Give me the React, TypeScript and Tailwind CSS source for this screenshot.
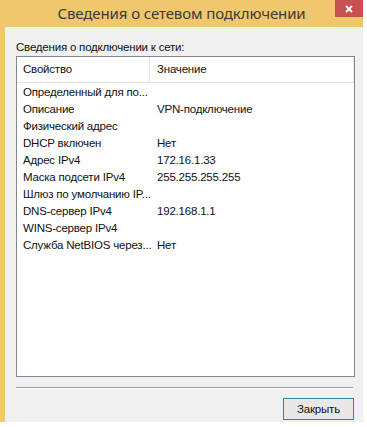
const rows: [string, string][] = [
  ['Определенный для по...', ''],
  ['Описание', 'VPN-подключение'],
  ['Физический адрес', ''],
  ['DHCP включен', 'Нет'],
  ['Адрес IPv4', '172.16.1.33'],
  ['Маска подсети IPv4', '255.255.255.255'],
  ['Шлюз по умолчанию IP...', ''],
  ['DNS-сервер IPv4', '192.168.1.1'],
  ['WINS-сервер IPv4', ''],
  ['Служба NetBIOS через...', 'Нет'],
];

export default function App() {
  return (
    <div className="w-[367px] h-[427px] bg-white font-['Liberation_Sans',Arial,sans-serif] text-[11.5px] tracking-[-0.2px] text-[#111]">
      <div className="w-[363px] h-[422px] flex flex-col overflow-hidden">
        {/* title bar */}
        <div className="h-[27px] bg-[#f0c76c] flex relative">
          <div className="flex-1 text-center font-['Noto_Sans',sans-serif] text-[15px] tracking-[-0.1px] leading-[26px] text-[#3a3a3a]">
            Сведения о сетевом подключении
          </div>
          <div className="absolute right-0 top-0 w-[28px] h-[17px] bg-[#c75050] flex items-center justify-center">
            <svg width="8" height="8" viewBox="0 0 8 8">
              <path d="M1 1L7 7M7 1L1 7" stroke="white" strokeWidth="1.8" />
            </svg>
          </div>
        </div>

        {/* body */}
        <div className="flex-1 bg-[#f0f0f0] border-l-[5px] border-[#f0c76c] pl-[11px] pt-[12px] flex flex-col">
          <div className="h-[16px] leading-[16px]">Сведения о подключении к сети:</div>
          <div className="mt-px w-[339px] h-[321px] bg-white border border-[#828790]">
            <div className="h-[26px] flex border-b border-[#e5e5e5]">
              <div className="w-[133px] pl-[6px] leading-[25px] border-r border-[#e5e5e5]">Свойство</div>
              <div className="flex-1 pl-[7px] leading-[25px] border-r border-[#e5e5e5]">Значение</div>
            </div>
            <div className="pt-px">
              {rows.map(([k, v]) => (
                <div key={k} className="h-[17px] flex leading-[17px]">
                  <div className="w-[134px] pl-[6px] pr-px whitespace-nowrap overflow-hidden">{k}</div>
                  <div className="flex-1 pl-[6px] whitespace-nowrap">{v}</div>
                </div>
              ))}
            </div>
          </div>
          <div className="mt-[10px] w-[337px] h-[2px] border-t border-[#a0a0a0] border-b border-b-white" />
          <div className="mt-[9px] w-[339px] flex justify-end pr-px">
            <button className="w-[71px] h-[22px] border border-[#3c7fb1] bg-[#e8e8e8] leading-[20px] text-[11.5px] text-[#111]">
              Закрыть
            </button>
          </div>
        </div>
      </div>
    </div>
  );
}
